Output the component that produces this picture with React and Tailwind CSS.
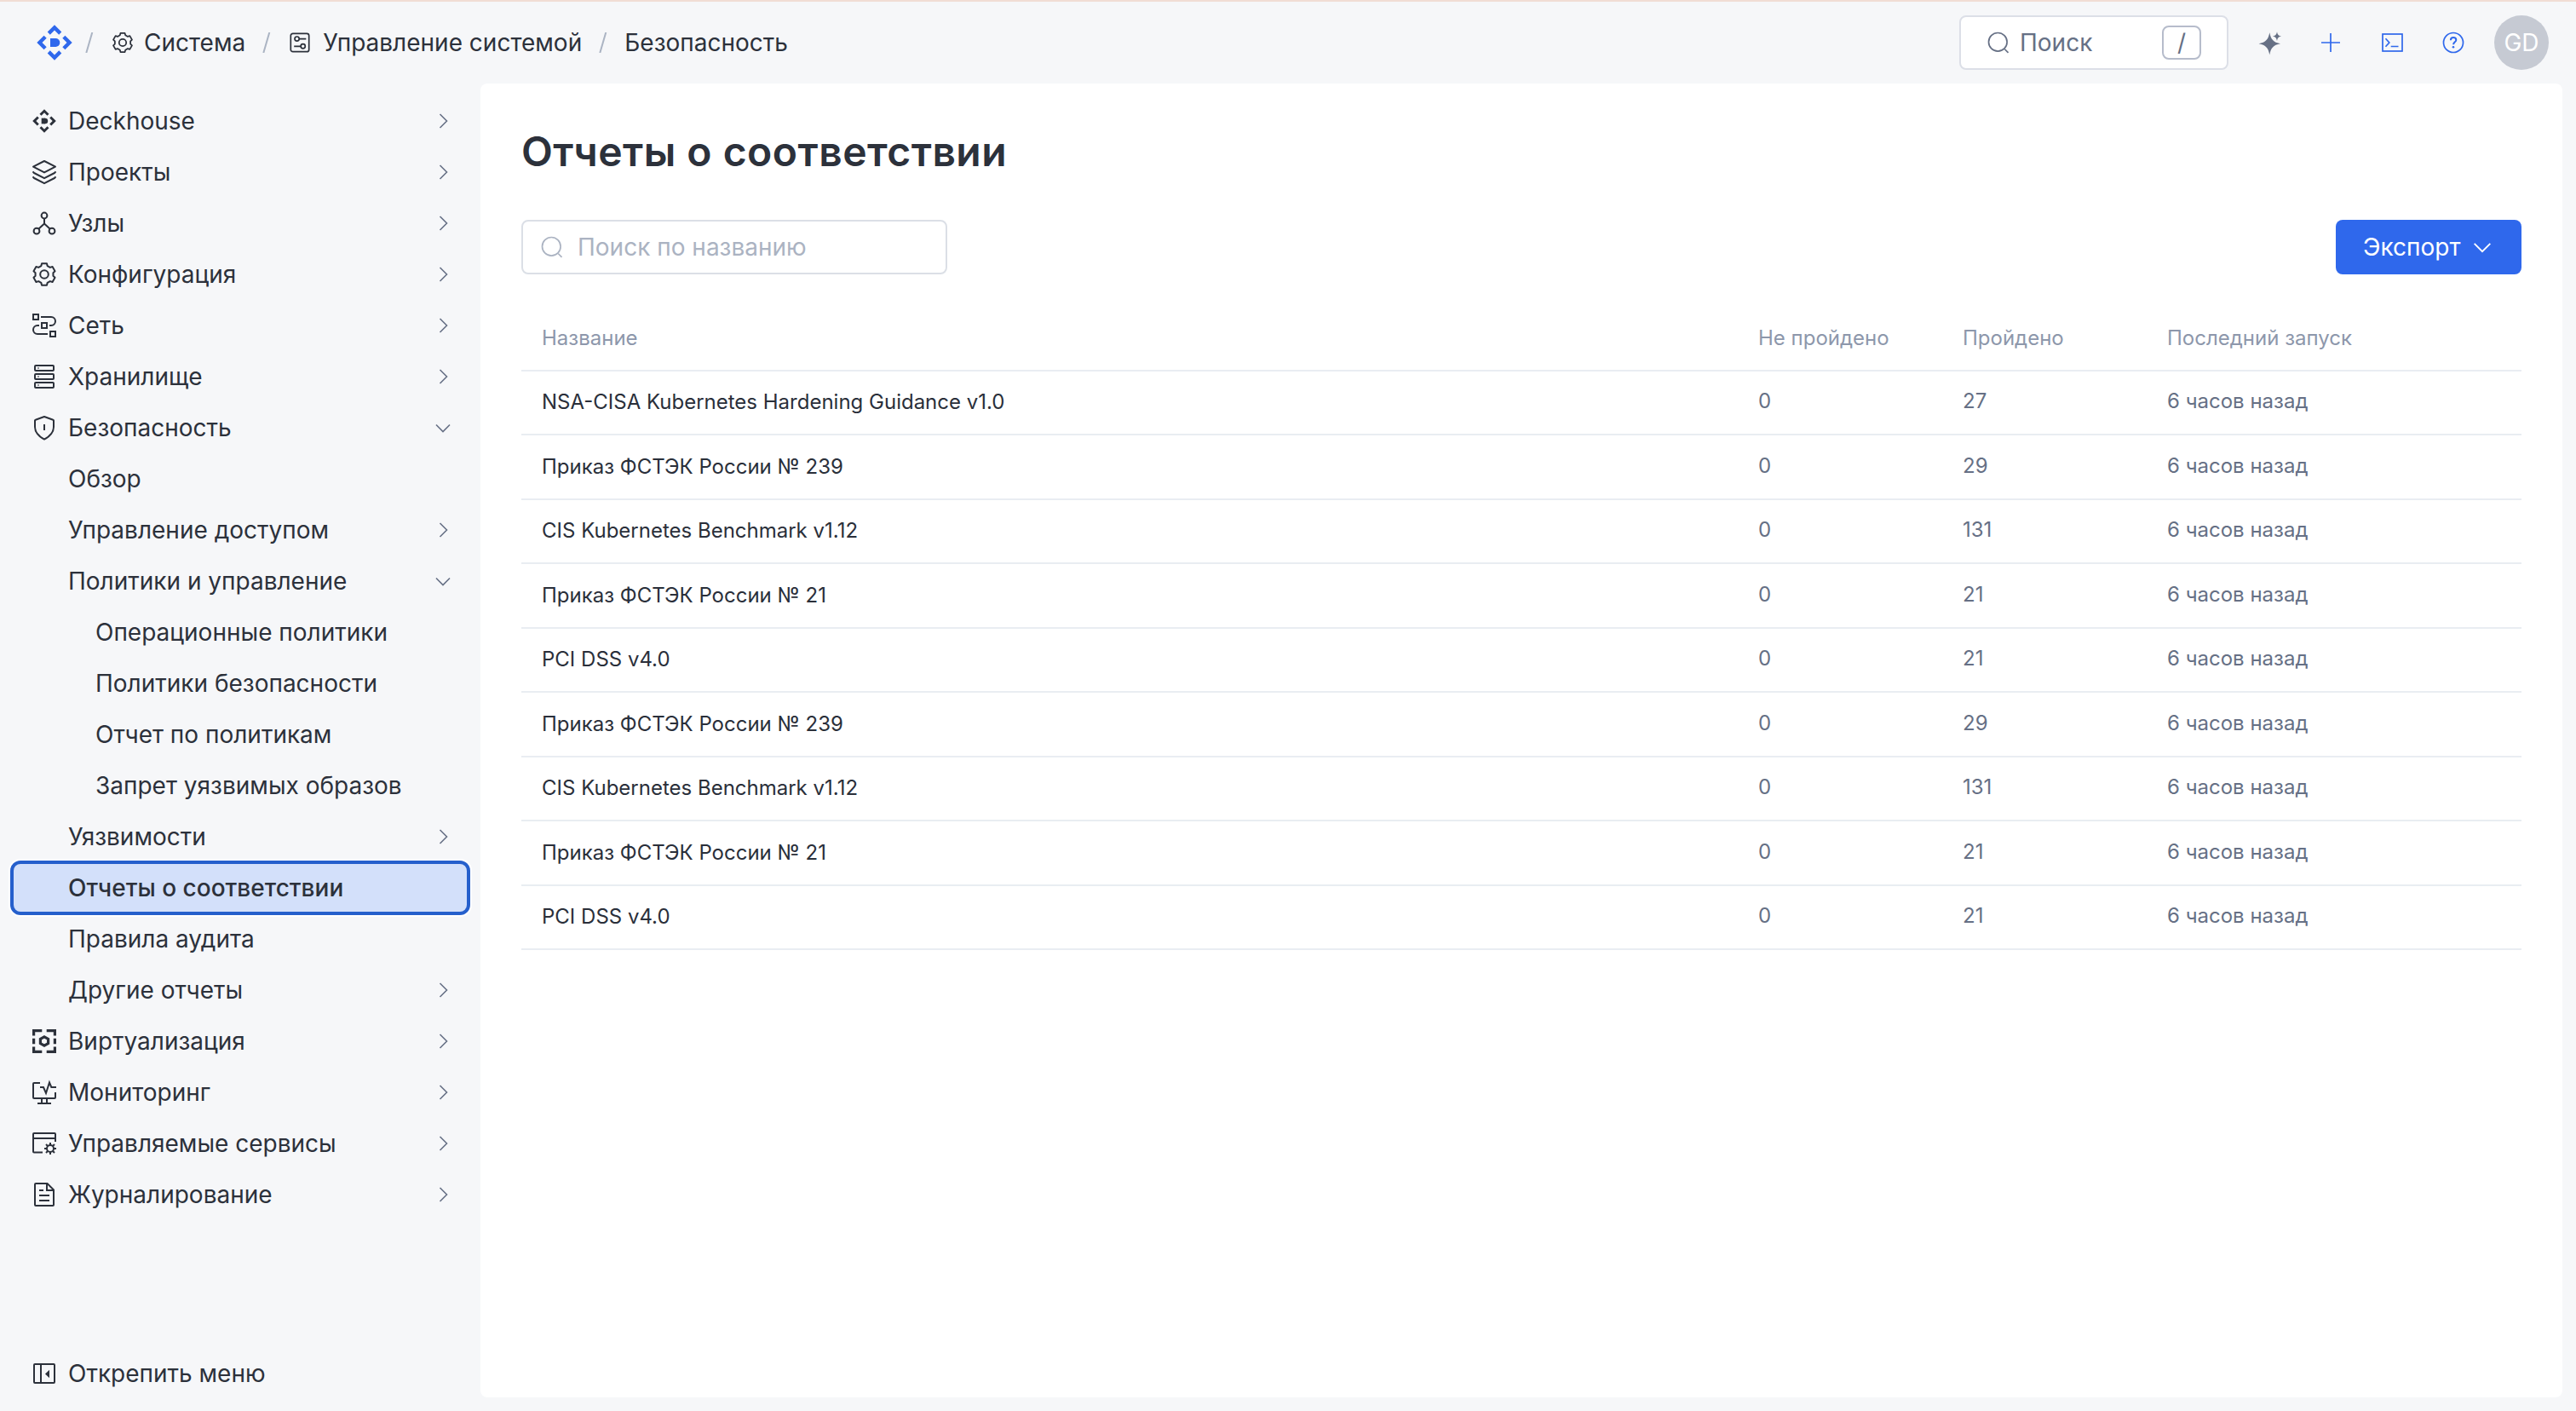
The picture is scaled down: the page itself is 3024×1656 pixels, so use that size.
import clsx from 'clsx';

const Icon = ({ size = 32, box = 32, className, children }) => (
  <svg
    width={size}
    height={size}
    viewBox={`0 0 ${box} ${box}`}
    fill="none"
    stroke="currentColor"
    strokeWidth="2"
    className={clsx('shrink-0', className)}
  >
    {children}
  </svg>
);

const polar = (deg, r) => {
  const a = (deg * Math.PI) / 180;
  return `${(16 + r * Math.sin(a)).toFixed(2)} ${(16 - r * Math.cos(a)).toFixed(2)}`;
};

const gearPath =
  'M' +
  [0, 60, 120, 180, 240, 300]
    .flatMap((d) => [polar(d - 20, 10.6), polar(d - 13, 13.1), polar(d + 13, 13.1), polar(d + 20, 10.6)])
    .join('L') +
  'Z';

const GearIcon = ({ size = 32 }) => (
  <Icon size={size}>
    <path d={gearPath} strokeLinejoin="round" />
    <circle cx="16" cy="16" r="4.8" />
  </Icon>
);

const DeckhouseIcon = ({ size = 32, className }) => (
  <Icon size={size} box={48} className={className}>
    <g fill="currentColor" stroke="none">
      <path d="M24 3.3l8.3 8.3-3.1 3.1L24 9.5l-5.2 5.2-3.1-3.1z" />
      <path d="M24 44.7l8.3-8.3-3.1-3.1-5.2 5.2-5.2-5.2-3.1 3.1z" />
      <path d="M3.3 24l8.3-8.3 3.1 3.1L9.5 24l5.2 5.2-3.1 3.1z" />
      <path d="M44.7 24l-8.3-8.3-3.1 3.1 5.2 5.2-5.2 5.2 3.1 3.1z" />
      <rect x="19" y="19" width="6.5" height="10" />
      <circle cx="25.3" cy="24" r="5" />
    </g>
  </Icon>
);

const LayersIcon = () => (
  <Icon>
    <path d="M16 3l13 6.6-13 6.8L3 9.6z" strokeLinejoin="round" />
    <path d="M2.5 15.4L4 17l12 6.2L28 17l1.5-1.6" strokeLinejoin="round" />
    <path d="M2.5 21.4L4 23l12 6.2L28 23l1.5-1.6" strokeLinejoin="round" />
  </Icon>
);

const NodesIcon = () => (
  <Icon>
    <circle cx="16" cy="7" r="3.4" />
    <circle cx="7" cy="25.2" r="3.4" />
    <circle cx="25" cy="25.2" r="3.4" />
    <path d="M16 10.5v6l-6.5 6M16 16.5l6.5 6" />
  </Icon>
);

const NetworkIcon = () => (
  <Icon>
    <rect x="3" y="3" width="6" height="6" />
    <rect x="13" y="13" width="6" height="6" />
    <rect x="23" y="23" width="6" height="6" />
    <path d="M12 6h12a5 5 0 0 1 0 10h-2M10 16H8a5 5 0 0 0 0 10h12" />
  </Icon>
);

const StorageIcon = () => (
  <Icon>
    {[3, 13, 23].map((y) => (
      <g key={y}>
        <rect x="5" y={y} width="22" height="6" rx="1" />
        <rect x="8" y={y + 2} width="2" height="2" fill="currentColor" fillOpacity="0.5" stroke="none" />
      </g>
    ))}
  </Icon>
);

const ShieldIcon = () => (
  <Icon>
    <path d="M16 3L26.3 6.7a1 1 0 0 1 .7 1V15c0 6.2-4 10.8-11 14.6C9 25.8 5 21.2 5 15V7.7a1 1 0 0 1 .7-1z" strokeLinejoin="round" />
    <path d="M16 12v7" />
  </Icon>
);

const VirtualizationIcon = () => (
  <Icon>
    <g fill="currentColor" stroke="none">
      <path d="M2 2h11.3v3.2H5.2v4.3H2zM30 2H18.7v3.2h8.1v4.3H30zM2 30h11.3v-3.2H5.2v-4.3H2zM30 30H18.7v-3.2h8.1v-4.3H30z" />
      <path d="M2 12.7h3.2v6.6H2zM26.8 12.7H30v6.6h-3.2z" />
    </g>
    <path d="M16 10.8l4.6 2.6v5.2L16 21.2l-4.6-2.6v-5.2z" strokeWidth="3.2" />
  </Icon>
);

const MonitoringIcon = () => (
  <Icon>
    <path d="M11 5H4a1 1 0 0 0-1 1v16a1 1 0 0 0 1 1h24a1 1 0 0 0 1-1v-6" />
    <path d="M11 10h4l3 7 4-12.5 2.3 5.5H30" />
    <path d="M13 23v6M19 23v6M8 29h16" />
  </Icon>
);

const ServicesIcon = () => (
  <Icon>
    <path d="M14 26.5H4a1 1 0 0 1-1-1V5a1 1 0 0 1 1-1h24a1 1 0 0 1 1 1v9M3 10h26" />
    <circle cx="23" cy="22" r="4" />
    <path d="M23 15v3M23 26v3M16 22h3M27 22h3M18 17l2.2 2.2M25.8 24.8L28 27M28 17l-2.2 2.2M20.2 24.8L18 27" />
  </Icon>
);

const LogsIcon = () => (
  <Icon>
    <path d="M6 3h13.500l7.500 7.500V28a1 1 0 0 1-1 1H6a1 1 0 0 1-1-1V4a1 1 0 0 1 1-1z" />
    <path d="M19 3v8h8M10 11h5M10 17h12M10 23h12" />
  </Icon>
);

const UnpinIcon = () => (
  <Icon>
    <rect x="4" y="5" width="24" height="22" rx="1" />
    <path d="M12 5v22" />
    <path d="M17 16.5l5-4.8v9.6z" fill="currentColor" stroke="none" />
  </Icon>
);

const SlidersIcon = ({ className }) => (
  <Icon size={24} box={24} className={className}>
    <g strokeWidth="1.7">
      <rect x="1.3" y="1.3" width="21.4" height="21.4" rx="2.5" />
      <circle cx="8.6" cy="7.6" r="2.6" />
      <circle cx="15.7" cy="16.3" r="2.6" />
      <path d="M11.2 7.6h8.1M5.2 16.3h7.9" />
    </g>
  </Icon>
);

const SearchIcon = () => (
  <Icon size={28} box={28}>
    <circle cx="13.3" cy="13.3" r="10.8" strokeWidth="1.7" />
    <path d="M21.2 21.5l4.3 4.3" strokeWidth="1.7" />
  </Icon>
);

const SparklesIcon = () => (
  <Icon className="text-[#667085]">
    <g fill="currentColor" stroke="none">
      <path d="M16.300 4.300c1.600 8 4.200 11.300 12.700 13-8.500 1.700-11.100 5-12.700 13-1.600-8-4.200-11.300-12.700-13 8.500-1.700 11.100-5 12.700-13z" />
      <path d="M25 3.200c.7 3.500 1.700 4.700 5.200 5.400-3.500.7-4.500 1.900-5.200 5.400-.7-3.500-1.700-4.700-5.200-5.400 3.500-.7 4.500-1.900 5.200-5.400z" />
    </g>
  </Icon>
);

const PlusIcon = () => (
  <Icon>
    <path d="M16 5v22M5 16h22" strokeWidth="1.7" />
  </Icon>
);

const TerminalIcon = () => (
  <Icon>
    <rect x="5" y="6" width="23" height="20" strokeWidth="1.7" />
    <path d="M8.500 11.300l4.300 4.700-4.300 4.700M14.700 20.500h8.800" strokeWidth="1.7" />
  </Icon>
);

const HelpIcon = () => (
  <Icon>
    <circle cx="16" cy="16" r="11.5" strokeWidth="1.7" />
    <path d="M12.900 13.200c0-2 1.300-3.200 3.200-3.200s3.200 1.200 3.200 2.900c0 2.400-3.200 2.500-3.200 5.400" />
    <circle cx="16" cy="21.300" r="1.300" fill="currentColor" stroke="none" />
  </Icon>
);

const Chevron = ({ open = false, size = 24, className }) => (
  <Icon size={size} box={24} className={className}>
    <path d={open ? 'M4 8.5l8 8 8-8' : 'M8.5 4l8 8-8 8'} strokeWidth="1.6" />
  </Icon>
);

const menu = [
  { label: 'Deckhouse', icon: DeckhouseIcon, arrow: 'right' },
  { label: 'Проекты', icon: LayersIcon, arrow: 'right' },
  { label: 'Узлы', icon: NodesIcon, arrow: 'right' },
  { label: 'Конфигурация', icon: GearIcon, arrow: 'right' },
  { label: 'Сеть', icon: NetworkIcon, arrow: 'right' },
  { label: 'Хранилище', icon: StorageIcon, arrow: 'right' },
  { label: 'Безопасность', icon: ShieldIcon, arrow: 'down' },
  { label: 'Обзор', level: 1 },
  { label: 'Управление доступом', level: 1, arrow: 'right' },
  { label: 'Политики и управление', level: 1, arrow: 'down' },
  { label: 'Операционные политики', level: 2 },
  { label: 'Политики безопасности', level: 2 },
  { label: 'Отчет по политикам', level: 2 },
  { label: 'Запрет уязвимых образов', level: 2 },
  { label: 'Уязвимости', level: 1, arrow: 'right' },
  { label: 'Отчеты о соответствии', level: 1, active: true },
  { label: 'Правила аудита', level: 1 },
  { label: 'Другие отчеты', level: 1, arrow: 'right' },
  { label: 'Виртуализация', icon: VirtualizationIcon, arrow: 'right' },
  { label: 'Мониторинг', icon: MonitoringIcon, arrow: 'right' },
  { label: 'Управляемые сервисы', icon: ServicesIcon, arrow: 'right' },
  { label: 'Журналирование', icon: LogsIcon, arrow: 'right' },
];

const reports = [
  { name: 'NSA-CISA Kubernetes Hardening Guidance v1.0', failed: 0, passed: 27 },
  { name: 'Приказ ФСТЭК России № 239', failed: 0, passed: 29 },
  { name: 'CIS Kubernetes Benchmark v1.12', failed: 0, passed: 131 },
  { name: 'Приказ ФСТЭК России № 21', failed: 0, passed: 21 },
  { name: 'PCI DSS v4.0', failed: 0, passed: 21 },
  { name: 'Приказ ФСТЭК России № 239', failed: 0, passed: 29 },
  { name: 'CIS Kubernetes Benchmark v1.12', failed: 0, passed: 131 },
  { name: 'Приказ ФСТЭК России № 21', failed: 0, passed: 21 },
  { name: 'PCI DSS v4.0', failed: 0, passed: 21 },
];

const MenuItem = ({ label, icon: ItemIcon, level = 0, arrow, active }) => (
  <a
    href="#"
    className={clsx(
      'flex h-14 items-center rounded-lg pr-4',
      level === 0 && 'gap-3 pl-5',
      level === 1 && 'pl-16',
      level === 2 && 'pl-24',
      active && 'bg-[#d3e0fa] font-medium shadow-[0_0_0_4px_#255fcc,0_0_0_6px_#ffffff]'
    )}
  >
    {ItemIcon && <ItemIcon />}
    <span className="whitespace-nowrap">{label}</span>
    {arrow && <Chevron open={arrow === 'down'} className="ml-auto text-[#667085]" />}
  </a>
);

const Separator = () => (
  <svg width="10" height="24" viewBox="0 0 10 24" className="shrink-0" fill="none">
    <path d="M8.3 0L1.300 24" stroke="#abb4c3" strokeWidth="2" />
  </svg>
);

const Header = () => (
  <header className="flex h-24 items-center justify-between pl-10 pr-8">
    <nav className="flex items-center">
      <DeckhouseIcon size={48} className="text-[#2f68ec]" />
      <div className="ml-3 flex items-center gap-5">
        <Separator />
        <a href="#" className="flex items-center gap-[11px]">
          <GearIcon size={28} />
          <span>Система</span>
        </a>
        <Separator />
        <a href="#" className="flex items-center gap-[15px]">
          <SlidersIcon className="ml-0.5" />
          <span>Управление системой</span>
        </a>
        <Separator />
        <span>Безопасность</span>
      </div>
    </nav>

    <div className="flex items-center text-[#2f68ec]">
      <button className="flex h-16 w-[316px] items-center rounded-lg border-2 border-[#dcdfe7] bg-white px-[30px] text-[#667085]">
        <SearchIcon />
        <span className="ml-[11px]">Поиск</span>
        <span className="ml-auto flex h-10 w-[46px] items-center justify-center rounded-lg border-2 border-[#b6bccb]">/</span>
      </button>
      <div className="ml-8 flex items-center gap-10">
        <SparklesIcon />
        <PlusIcon />
        <TerminalIcon />
        <HelpIcon />
      </div>
      <div className="ml-8 flex size-16 items-center justify-center rounded-full bg-[#c6cad3] text-white">GD</div>
    </div>
  </header>
);

const Sidebar = () => (
  <aside className="flex w-[564px] shrink-0 flex-col justify-between p-4">
    <nav className="flex flex-col gap-1">
      {menu.map((item) => (
        <MenuItem key={item.label} {...item} />
      ))}
    </nav>
    <MenuItem label="Открепить меню" icon={UnpinIcon} />
  </aside>
);

const rowClass = 'grid h-[75.5px] grid-cols-[1fr_240px_240px_440px] items-center border-b-2 border-[#e9edf2]';

const ReportsTable = () => (
  <div className="mt-[38px] text-2xl/[32px] text-[#667085]">
    <div className={clsx(rowClass, 'pt-px text-[#8d97ab]')}>
      <span className="px-6">Название</span>
      <span className="px-6">Не пройдено</span>
      <span className="px-6">Пройдено</span>
      <span className="px-6">Последний запуск</span>
    </div>
    {reports.map((report, i) => (
      <div key={i} className={rowClass}>
        <span className="px-6 text-[#2a2f3a]">{report.name}</span>
        <span className="px-6 pb-0.5">{report.failed}</span>
        <span className="px-6 pb-0.5">{report.passed}</span>
        <span className="px-6 pb-0.5">6 часов назад</span>
      </div>
    ))}
  </div>
);

export default function App() {
  return (
    <div className="flex h-[1656px] w-[3024px] flex-col overflow-hidden border-t-2 border-[#f1ddd4] bg-[#f6f7f9] font-['Inter',sans-serif] text-[28px]/[40px] text-[#2c313b]">
      <Header />
      <div className="flex min-h-0 flex-1">
        <Sidebar />
        <main className="mr-4 mb-4 flex-1 rounded-lg bg-white p-12">
          <h1 className="text-5xl/[64px] font-semibold tracking-[0.01em]">Отчеты о соответствии</h1>
          <div className="mt-12 flex items-center justify-between">
            <div className="flex h-16 w-[500px] items-center rounded-lg border-2 border-[#dbdfe6] px-5 text-[#abb3c2]">
              <SearchIcon />
              <span className="ml-4">Поиск по названию</span>
            </div>
            <button className="flex h-16 w-[218px] items-center justify-between rounded-lg bg-[#2f68ec] px-8 text-white">
              Экспорт
              <Chevron open size={28} />
            </button>
          </div>
          <ReportsTable />
        </main>
      </div>
    </div>
  );
}
